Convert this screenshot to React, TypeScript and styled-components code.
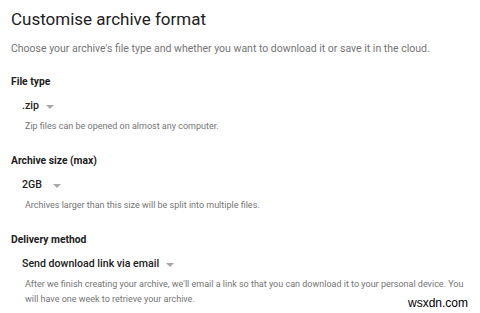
import React from "react";
import styled, { createGlobalStyle } from "styled-components";

const Global = createGlobalStyle`
  html, body { margin: 0; padding: 0; background: #ffffff; }
  body { font-family: Roboto, "Liberation Sans", Arial, sans-serif; }
`;

const Page = styled.div`
  width: 480px;
  height: 313px;
  box-sizing: border-box;
  padding: 9px 0 0 11px;
  position: relative;
  overflow: hidden;
  background: #fff;
`;

const Title = styled.h1`
  margin: 0;
  font-size: 17px;
  font-weight: 400;
  color: #212121;
  line-height: 20px;
`;

const Subtitle = styled.p`
  margin: 13px 0 0;
  font-size: 10.5px;
  color: #757575;
  line-height: 14px;
`;

const Section = styled.section<{ $gap: number }>`
  margin-top: ${(p) => p.$gap}px;
  display: flex;
  flex-direction: column;
`;

const Label = styled.h2`
  margin: 0;
  font-size: 10.3px;
  font-weight: 700;
  color: #212121;
  line-height: 14px;
`;

const Select = styled.div`
  margin: 9px 0 0 11px;
  display: flex;
  align-items: center;
  gap: 7px;
  font-size: 10.6px;
  font-weight: 500;
  color: #212121;
  line-height: 16px;
`;

const Value = styled.span<{ $w?: number }>`
  display: inline-block;
  min-width: ${(p) => (p.$w ? `${p.$w}px` : "auto")};
`;

const Arrow = styled.span`
  width: 0;
  height: 0;
  margin-top: 1px;
  border-left: 4px solid transparent;
  border-right: 4px solid transparent;
  border-top: 4px solid #a8a8a8;
`;

const Help = styled.p`
  margin: 5px 0 0 14px;
  font-size: 9px;
  color: #757575;
  line-height: 15px;
  max-width: 445px;
`;

const Watermark = styled.div`
  position: absolute;
  right: 12px;
  bottom: 3px;
  font-family: "Liberation Sans", Arial, sans-serif;
  font-size: 12px;
  line-height: 14px;
  color: #000;
`;

export default function App() {
  return (
    <>
      <Global />
      <Page>
        <Title>Customise archive format</Title>
        <Subtitle>
          Choose your archive's file type and whether you want to download it or save it in the cloud.
        </Subtitle>
        <Section $gap={19}>
          <Label>File type</Label>
          <Select>
            <Value>.zip</Value>
            <Arrow />
          </Select>
          <Help>Zip files can be opened on almost any computer.</Help>
        </Section>
        <Section $gap={20}>
          <Label>Archive size (max)</Label>
          <Select>
            <Value $w={24}>2GB</Value>
            <Arrow />
          </Select>
          <Help>Archives larger than this size will be split into multiple files.</Help>
        </Section>
        <Section $gap={20}>
          <Label>Delivery method</Label>
          <Select>
            <Value>Send download link via email</Value>
            <Arrow />
          </Select>
          <Help>
            After we finish creating your archive, we'll email a link so that you can download it to your personal device. You will have one week to retrieve your archive.
          </Help>
        </Section>
        <Watermark>wsxdn.com</Watermark>
      </Page>
    </>
  );
}
